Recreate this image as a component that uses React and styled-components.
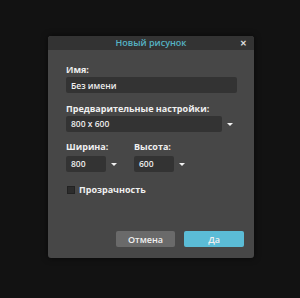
import React, {useState} from "react";
import styled, {createGlobalStyle} from "styled-components";

const Global = createGlobalStyle`
  html, body { margin:0; padding:0; background:#121212; }
  body { font-family:"Open Sans", "Liberation Sans", sans-serif; }
`;

const Page = styled.div`
  width:300px; height:298px;
  display:flex; align-items:flex-start; justify-content:flex-start;
  padding:36px 0 0 48px; box-sizing:border-box;
`;

const Dialog = styled.div`
  width:206px; height:222px;
  background:#474747;
  border-radius:3px;
  display:flex; flex-direction:column;
  overflow:hidden;
  box-shadow:0 0 6px rgba(0,0,0,0.6);
`;

const TitleBar = styled.div`
  height:14px; flex:none;
  background:#333333;
  display:flex; align-items:center; justify-content:center;
  position:relative;
  color:#56b4c4; font-size:9px; font-weight:600; line-height:14px;
`;

const Close = styled.span`
  position:absolute; right:7px; top:0;
  color:#e0e0e0; font-size:8px; font-weight:700; line-height:14px;
`;

const Body = styled.div`
  flex:1;
  display:flex; flex-direction:column;
  padding:14px 18px 11px 18px;
`;

const Label = styled.div`
  color:#f0f0f0; font-size:9px; font-weight:700; line-height:12px;
  margin-bottom:${p => p.$gap || 1}px;
`;

const Field = styled.div`
  display:flex; flex-direction:column;
  margin-bottom:${p => p.$mb || 0}px;
`;

const Input = styled.input`
  width:${p => p.$w}px; height:16px; box-sizing:border-box;
  background:#333333; border:none; border-radius:2px; outline:none;
  color:#eeeeee; font-family:inherit; font-size:8.5px; font-weight:600;
  padding:0 5px;
`;

const SelectRow = styled.div`
  display:flex; align-items:center; gap:5px;
`;

const SelectBox = styled.div`
  width:${p => p.$w}px; height:16px; box-sizing:border-box;
  background:#333333; border-radius:2px;
  color:#eeeeee; font-size:8.5px; font-weight:600; line-height:16px;
  padding:0 5px;
`;

const Arrow = styled.span`
  width:0; height:0;
  border-left:3px solid transparent; border-right:3px solid transparent;
  border-top:3px solid #f2f2f2;
`;

const Pair = styled.div`
  display:flex; gap:17px;
`;

const CheckRow = styled.label`
  display:flex; align-items:center; gap:4px;
  color:#f0f0f0; font-size:9px; font-weight:700;
  margin-top:11px; margin-left:1px;
`;

const Box = styled.span`
  width:8px; height:8px; box-sizing:border-box;
  background:#2c2c2c; border:1px solid #222;
  display:inline-block;
`;

const Footer = styled.div`
  margin-top:auto;
  display:flex; justify-content:flex-end; gap:9px;
  margin-right:-8px;
`;

const Button = styled.button`
  width:${p => p.$w}px; height:16px;
  border:none; border-radius:2px;
  background:${p => p.$primary ? "#5bbcd6" : "#6a6a6a"};
  color:#f0f0f0; font-family:inherit; font-size:9px; font-weight:600;
  padding:0; cursor:pointer;
`;

export default function App(){
  const [name, setName] = useState("Без имени");
  const [alpha, setAlpha] = useState(false);
  return (
    <Page>
      <Global/>
      <Dialog>
        <TitleBar>
          Новый рисунок
          <Close>✕</Close>
        </TitleBar>
        <Body>
          <Field $mb={10}>
            <Label>Имя:</Label>
            <Input $w={171} value={name} onChange={e=>setName(e.target.value)} />
          </Field>
          <Field $mb={9}>
            <Label $gap={1}>Предварительные настройки:</Label>
            <SelectRow>
              <SelectBox $w={156}>800 x 600</SelectBox>
              <Arrow/>
            </SelectRow>
          </Field>
          <Pair>
            <Field>
              <Label $gap={3}>Ширина:</Label>
              <SelectRow>
                <SelectBox $w={40}>800</SelectBox>
                <Arrow/>
              </SelectRow>
            </Field>
            <Field>
              <Label $gap={3}>Высота:</Label>
              <SelectRow>
                <SelectBox $w={40}>600</SelectBox>
                <Arrow/>
              </SelectRow>
            </Field>
          </Pair>
          <CheckRow onClick={()=>setAlpha(!alpha)}>
            <Box/>
            Прозрачность
          </CheckRow>
          <Footer>
            <Button $w={59}>Отмена</Button>
            <Button $w={60} $primary>Да</Button>
          </Footer>
        </Body>
      </Dialog>
    </Page>
  );
}
